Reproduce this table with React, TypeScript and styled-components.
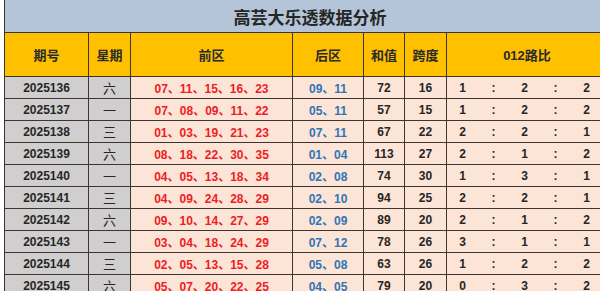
import styled, { createGlobalStyle } from "styled-components";

const GlobalStyle = createGlobalStyle`
  html, body {
    margin: 0;
    padding: 0;
    background: #ffffff;
    overflow: hidden;
  }
  body {
    font-family: "Liberation Sans", "Noto Sans CJK SC", sans-serif;
  }
`;

interface IDraw {
  issue: string;
  week: string;
  front: string;
  back: string;
  sum: number;
  span: number;
  ratio: [number, number, number];
}

const draws: IDraw[] = [
  { issue: "2025136", week: "六", front: "07、11、15、16、23", back: "09、11", sum: 72, span: 16, ratio: [1, 2, 2] },
  { issue: "2025137", week: "一", front: "07、08、09、11、22", back: "05、11", sum: 57, span: 15, ratio: [1, 2, 2] },
  { issue: "2025138", week: "三", front: "01、03、19、21、23", back: "07、11", sum: 67, span: 22, ratio: [2, 2, 1] },
  { issue: "2025139", week: "六", front: "08、18、22、30、35", back: "01、04", sum: 113, span: 27, ratio: [2, 1, 2] },
  { issue: "2025140", week: "一", front: "04、05、13、18、34", back: "02、08", sum: 74, span: 30, ratio: [1, 3, 1] },
  { issue: "2025141", week: "三", front: "04、09、24、28、29", back: "02、10", sum: 94, span: 25, ratio: [2, 2, 1] },
  { issue: "2025142", week: "六", front: "09、10、14、27、29", back: "02、09", sum: 89, span: 20, ratio: [2, 1, 2] },
  { issue: "2025143", week: "一", front: "03、04、18、24、29", back: "07、12", sum: 78, span: 26, ratio: [3, 1, 1] },
  { issue: "2025144", week: "三", front: "02、05、13、15、28", back: "05、08", sum: 63, span: 26, ratio: [1, 2, 2] },
  { issue: "2025145", week: "六", front: "05、07、20、22、25", back: "04、05", sum: 79, span: 20, ratio: [0, 3, 2] },
];

export default function App() {
  return (
    <Page>
      <GlobalStyle />
      <Sheet>
        <Title>高芸大乐透数据分析</Title>
        <HeadCell>期号</HeadCell>
        <HeadCell>星期</HeadCell>
        <HeadCell>前区</HeadCell>
        <HeadCell>后区</HeadCell>
        <HeadCell>和值</HeadCell>
        <HeadCell>跨度</HeadCell>
        <HeadCell>012路比</HeadCell>
        {draws.map((d) => (
          <Row key={d.issue}>
            <Cell $tone="gray">{d.issue}</Cell>
            <Cell $tone="gray">
              <Week>{d.week}</Week>
            </Cell>
            <Cell $color="#ee1c25">{d.front}</Cell>
            <Cell $color="#2e75b6">{d.back}</Cell>
            <Cell>{d.sum}</Cell>
            <Cell>{d.span}</Cell>
            <RatioCell>
              <RatioPart>{d.ratio[0]}</RatioPart>
              <RatioPart>:</RatioPart>
              <RatioPart>{d.ratio[1]}</RatioPart>
              <RatioPart>:</RatioPart>
              <RatioPart>{d.ratio[2]}</RatioPart>
            </RatioCell>
          </Row>
        ))}
      </Sheet>
    </Page>
  );
}

const Page = styled.div`
  width: 600px;
  height: 291px;
  overflow: hidden;
  padding-left: 4px;
  box-sizing: border-box;
  background: #ffffff;
`;

const Sheet = styled.div`
  display: grid;
  grid-template-columns: 83px 41px 161px 70px 40px 41px 160px;
  grid-template-rows: 32px 43px;
  grid-auto-rows: 21px;
  gap: 1px;
  background: #3b3631;
  border-left: 1px solid #3b3631;
  width: 602px;
`;

const Title = styled.div`
  grid-column: 1 / -1;
  background: #b5c5d9;
  display: flex;
  align-items: center;
  justify-content: center;
  padding-left: 8px;
  font-family: "Noto Sans CJK SC", sans-serif;
  font-size: 17px;
  font-weight: 700;
  color: #262626;
`;

const HeadCell = styled.div`
  background: #ffc000;
  display: flex;
  align-items: center;
  justify-content: center;
  font-family: "Liberation Sans", "Noto Sans CJK SC", sans-serif;
  font-size: 13px;
  font-weight: 700;
  color: #2a2a2a;
`;

const Row = styled.div`
  display: contents;
`;

const Cell = styled.div<{ $tone?: "gray"; $color?: string }>`
  background: ${(p) => (p.$tone === "gray" ? "#d0cece" : "#fce4d6")};
  color: ${(p) => p.$color || "#262626"};
  display: flex;
  align-items: center;
  justify-content: center;
  font-size: 12px;
  font-weight: 700;
  white-space: nowrap;
`;

const Week = styled.span`
  font-family: "Noto Sans CJK SC", sans-serif;
  font-weight: 400;
  font-size: 13px;
`;

const RatioCell = styled.div`
  background: #fce4d6;
  display: grid;
  grid-template-columns: repeat(5, 31px);
  align-items: center;
  font-size: 12px;
  font-weight: 700;
  color: #262626;
`;

const RatioPart = styled.span`
  text-align: center;
`;
